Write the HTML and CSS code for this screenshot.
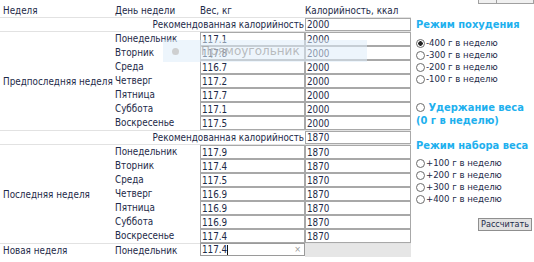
FILE: index.html
```html
<!DOCTYPE html>
<html>
<head>
  <meta charset="UTF-8">
  <link rel="stylesheet" href="styles.css">
</head>
<body>
  <div class="page">

    <!-- таблица веса и калорийности -->
    <div class="table">
      <div class="th">Неделя</div>
      <div class="th">День недели</div>
      <div class="th th-flush">Вес, кг</div>
      <div class="th th-flush">Калорийность, ккал</div>

      <div class="rec-label">Рекомендованная калорийность</div>
      <div class="rec-cell"><input class="field" type="text" value="2000"></div>

      <div class="week week-1">Предпоследняя неделя</div>
      <div class="day">Понедельник</div><input class="field" type="text" value="117.1"><input class="field" type="text" value="2000">
      <div class="day">Вторник</div><input class="field" type="text" value="117.8"><input class="field" type="text" value="2000">
      <div class="day">Среда</div><input class="field" type="text" value="116.7"><input class="field" type="text" value="2000">
      <div class="day">Четверг</div><input class="field" type="text" value="117.2"><input class="field" type="text" value="2000">
      <div class="day">Пятница</div><input class="field" type="text" value="117.7"><input class="field" type="text" value="2000">
      <div class="day">Суббота</div><input class="field" type="text" value="117.1"><input class="field" type="text" value="2000">
      <div class="day">Воскресенье</div><input class="field" type="text" value="117.5"><input class="field" type="text" value="2000">

      <div class="rec-label">Рекомендованная калорийность</div>
      <div class="rec-cell"><input class="field" type="text" value="1870"></div>

      <div class="week week-2">Последняя неделя</div>
      <div class="day">Понедельник</div><input class="field" type="text" value="117.9"><input class="field" type="text" value="1870">
      <div class="day">Вторник</div><input class="field" type="text" value="117.4"><input class="field" type="text" value="1870">
      <div class="day">Среда</div><input class="field" type="text" value="117.5"><input class="field" type="text" value="1870">
      <div class="day">Четверг</div><input class="field" type="text" value="116.9"><input class="field" type="text" value="1870">
      <div class="day">Пятница</div><input class="field" type="text" value="116.9"><input class="field" type="text" value="1870">
      <div class="day">Суббота</div><input class="field" type="text" value="116.9"><input class="field" type="text" value="1870">
      <div class="day">Воскресенье</div><input class="field" type="text" value="117.4"><input class="field" type="text" value="1870">

      <div class="new new-week">Новая неделя</div>
      <div class="new new-day">Понедельник</div>
      <div class="new editing">
        <span class="editing-value">117.4</span><span class="caret"></span>
        <span class="clear">×</span>
      </div>
      <div class="new blank"></div>
    </div>

    <!-- режимы -->
    <div class="modes">
      <div class="stub"><span></span></div>

      <div class="mode-title">Режим похудения</div>
      <label class="opt"><input type="radio" name="mode" checked>-400 г в неделю</label>
      <label class="opt"><input type="radio" name="mode">-300 г в неделю</label>
      <label class="opt"><input type="radio" name="mode">-200 г в неделю</label>
      <label class="opt"><input type="radio" name="mode">-100 г в неделю</label>

      <label class="mode-title keep"><input type="radio" name="mode"> Удержание веса<br>(0 г в неделю)</label>

      <div class="mode-title gain">Режим набора веса</div>
      <label class="opt"><input type="radio" name="mode">+100 г в неделю</label>
      <label class="opt"><input type="radio" name="mode">+200 г в неделю</label>
      <label class="opt"><input type="radio" name="mode">+300 г в неделю</label>
      <label class="opt"><input type="radio" name="mode">+400 г в неделю</label>

      <button class="calc">Рассчитать</button>
    </div>

    <!-- перетаскиваемый элемент -->
    <div class="ghost">
      <span class="ghost-dot"></span>
      <span class="ghost-text">Прямоугольник</span>
    </div>
  </div>
</body>
</html>
```

FILE: styles.css
```css
body {
  margin: 0;
  background: #fff;
  font-family: "DejaVu Sans Condensed", "DejaVu Sans", sans-serif;
  font-size: 9.8px;
  color: #1d2a48;
}

.page {
  position: relative;
  display: flex;
  width: 534px;
  height: 262px;
  overflow: hidden;
}

.table {
  display: grid;
  grid-template-columns: 112px 88px 105px 106px;
  grid-template-rows: 17px 15px repeat(7, 14px) 15px repeat(7, 14px) 15px;
  width: 411px;
}

.th {
  padding: 5px 0 0 3px;
  line-height: 12px;
  white-space: nowrap;
}

.th-flush {
  padding-left: 0;
}

.rec-label {
  grid-column: 1 / 4;
  text-align: right;
  padding-right: 1px;
  line-height: 13px;
  border-top: 1px solid #e2e2e2;
  border-bottom: 1px solid #e2e2e2;
  white-space: nowrap;
}

.rec-cell {
  border-top: 1px solid #e2e2e2;
  border-bottom: 1px solid #e2e2e2;
}

.rec-cell .field {
  height: 13px;
}

.week {
  grid-column: 1;
  grid-row: span 7;
  display: flex;
  align-items: center;
  padding-left: 3px;
  white-space: nowrap;
}

.day {
  grid-column: 2;
  padding-left: 3px;
  line-height: 14px;
}

.field {
  display: block;
  width: 100%;
  height: 14px;
  margin: 0;
  padding: 0 1px;
  box-sizing: border-box;
  border: 1px solid #a8a8a8;
  font: inherit;
  line-height: 12px;
  color: inherit;
  background: #fff;
  outline: none;
}

.new {
  border-top: 1px solid #e2e2e2;
  line-height: 13px;
}

.new-week,
.new-day {
  padding-left: 3px;
}

.editing {
  border: 1px solid #9a9a9a;
  height: 13px;
  box-sizing: border-box;
  padding: 0 1px;
  line-height: 11px;
  display: flex;
  align-items: center;
}

.caret {
  width: 1px;
  height: 10px;
  background: #111;
}

.clear {
  margin-left: auto;
  margin-right: 2px;
  color: #999;
  font-size: 9px;
}

.blank {
  background: #e6e6e6;
  height: 14px;
  box-sizing: border-box;
}

.modes {
  flex: 1;
  display: flex;
  flex-direction: column;
  padding-left: 5px;
}

.stub {
  align-self: flex-end;
  width: 54px;
  height: 3px;
  border: 1px solid #a0a0a0;
  border-top: none;
  background: #f0f0f0;
  position: relative;
}

.stub span {
  position: absolute;
  left: 17px;
  top: 0;
  bottom: 0;
  border-left: 1px solid #a0a0a0;
}

.mode-title {
  display: block;
  margin-top: 13px;
  font-size: 11px;
  font-weight: bold;
  line-height: 16px;
  color: #1eb0ee;
  white-space: nowrap;
}

.opt {
  display: flex;
  align-items: center;
  font-size: 9.5px;
  line-height: 12px;
  white-space: nowrap;
}

.mode-title + .opt {
  margin-top: 4px;
}

.keep {
  margin-top: 16px;
  line-height: 13px;
}

.gain {
  margin-top: 11px;
}

.gain + .opt {
  margin-top: 3px;
}

input[type="radio"] {
  appearance: none;
  width: 9px;
  height: 9px;
  margin: 0 1px 0 0;
  border: 1px solid #6c6c6c;
  border-radius: 50%;
  box-sizing: border-box;
  background: #fff;
  flex: none;
}

input[type="radio"]:checked {
  background: radial-gradient(circle, #222 0 2px, #fff 2.5px);
}

.keep input[type="radio"] {
  display: inline-block;
  vertical-align: -1px;
  margin-right: 0;
}

.calc {
  align-self: flex-end;
  margin: 13px 2px 0 0;
  height: 13px;
  padding: 0 2px;
  font: inherit;
  font-size: 9px;
  line-height: 11px;
  color: #1d2a48;
  background: #e1e1e1;
  border: 1px solid #8f8f8f;
  border-radius: 0;
}

.ghost {
  position: absolute;
  left: 163px;
  top: 40px;
  width: 204px;
  height: 22px;
  display: flex;
  align-items: center;
  background: rgba(222, 236, 250, 0.55);
  pointer-events: none;
}

.ghost-dot {
  width: 7px;
  height: 7px;
  margin-left: 9px;
  border-radius: 50%;
  background: rgba(200, 200, 200, 0.85);
}

.ghost-text {
  margin-left: 22px;
  font-family: "DejaVu Sans", sans-serif;
  font-size: 12px;
  color: rgba(160, 160, 160, 0.7);
}
```
